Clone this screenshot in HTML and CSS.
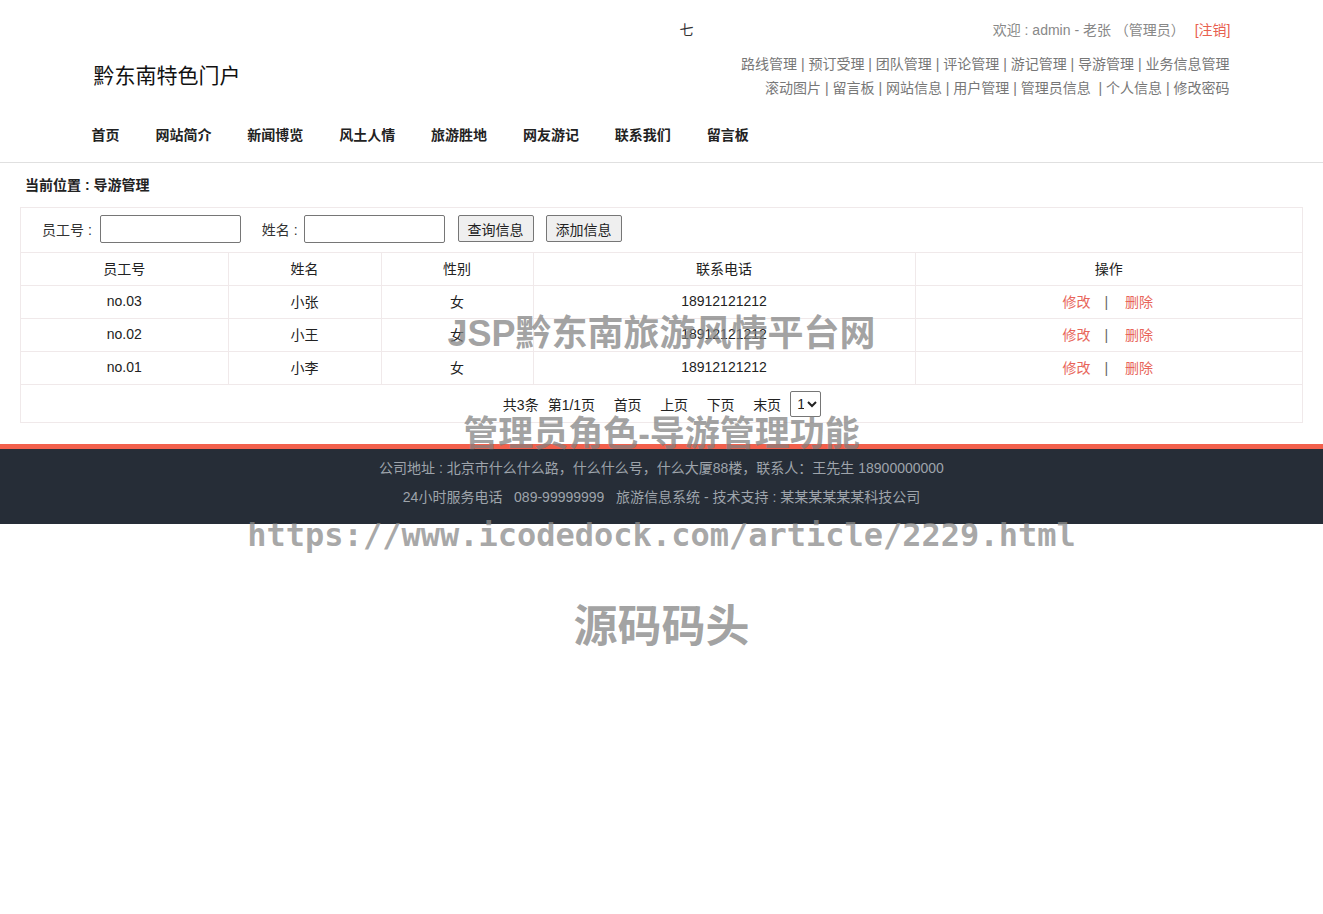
FILE: index.html
```html
<!DOCTYPE html>
<html lang="zh-CN">
<head>
<meta charset="utf-8">
<title>导游管理</title>
<link rel="stylesheet" href="styles.css">
</head>
<body>
<header class="site-header">
  <div class="container">
    <div class="top-row">
      <span class="odd-char">七</span>
      <span class="welcome">欢迎 : admin - 老张 （管理员） <a class="logout" href="#">[注销]</a></span>
    </div>
    <div class="brand-row">
      <div class="logo">黔东南特色门户</div>
      <div class="admin-links">
        <div>路线管理 | 预订受理 | 团队管理 | 评论管理 | 游记管理 | 导游管理 | 业务信息管理</div>
        <div>滚动图片 | 留言板 | 网站信息 | 用户管理 | 管理员信息 &nbsp;| 个人信息 | 修改密码</div>
      </div>
    </div>
    <nav class="main-nav">
      <a href="#">首页</a>
      <a href="#">网站简介</a>
      <a href="#">新闻博览</a>
      <a href="#">风土人情</a>
      <a href="#">旅游胜地</a>
      <a href="#">网友游记</a>
      <a href="#">联系我们</a>
      <a href="#">留言板</a>
    </nav>
  </div>
</header>

<main class="main">
  <div class="crumb">当前位置 : 导游管理</div>
  <div class="panel">
    <form class="search">
      <label class="lbl">员工号 :</label>
      <input class="inp" type="text">
      <label class="lbl lbl-name">姓名 :</label>
      <input class="inp" type="text">
      <button class="btn btn-query" type="button">查询信息</button>
      <button class="btn btn-add" type="button">添加信息</button>
    </form>
    <table class="grid">
      <colgroup>
        <col class="c1"><col class="c2"><col class="c3"><col class="c4"><col class="c5">
      </colgroup>
      <thead>
        <tr><th>员工号</th><th>姓名</th><th>性别</th><th>联系电话</th><th>操作</th></tr>
      </thead>
      <tbody>
        <tr><td>no.03</td><td>小张</td><td>女</td><td>18912121212</td><td class="ops"><a href="#">修改</a><span class="sep">|</span><a href="#">删除</a></td></tr>
        <tr><td>no.02</td><td>小王</td><td>女</td><td>18912121212</td><td class="ops"><a href="#">修改</a><span class="sep">|</span><a href="#">删除</a></td></tr>
        <tr><td>no.01</td><td>小李</td><td>女</td><td>18912121212</td><td class="ops"><a href="#">修改</a><span class="sep">|</span><a href="#">删除</a></td></tr>
      </tbody>
    </table>
    <div class="pager">
      <span>共3条</span>
      <span class="pg-cur">第1/1页</span>
      <a href="#">首页</a>
      <a href="#">上页</a>
      <a href="#">下页</a>
      <a href="#">末页</a>
      <select class="pg-sel"><option>1</option></select>
    </div>
  </div>
</main>

<footer class="site-footer">
  <p>公司地址 : 北京市什么什么路，什么什么号，什么大厦88楼，联系人：王先生 18900000000</p>
  <p>24小时服务电话 &nbsp;&nbsp;089-99999999 &nbsp;&nbsp;旅游信息系统 - 技术支持 : 某某某某某某科技公司</p>
</footer>

<div class="watermarks" aria-hidden="true">
  <div class="wm wm1">JSP黔东南旅游风情平台网</div>
  <div class="wm wm2">管理员角色-导游管理功能</div>
  <div class="wm wm3">https://www.icodedock.com/article/2229.html</div>
  <div class="wm wm4">源码码头</div>
</div>
</body>
</html>
```

FILE: styles.css
```css
* { box-sizing: border-box; }
html, body { margin: 0; padding: 0; background: #fff; }
body {
  font-family: "Liberation Sans", "Noto Sans CJK SC", sans-serif;
  font-size: 14px;
  color: #222;
  position: relative;
  min-height: 914px;
}
a { text-decoration: none; color: inherit; }

.site-header { border-bottom: 1px solid #e0e0e0; }
.container { width: 1140px; margin: 0 auto; }

.top-row {
  display: flex;
  align-items: center;
  height: 46px;
  padding-top: 12px;
}
.odd-char { margin-left: 588px; font-size: 14px; color: #333; }
.welcome { margin-left: auto; color: #888; font-size: 14px; padding-right: 1px; }
.logout { color: #e8604f; margin-left: 6px; }

.brand-row {
  display: flex;
  justify-content: space-between;
  align-items: center;
  height: 52px;
  padding-top: 8px;
}
.logo { font-size: 21px; color: #111; padding-left: 2px; line-height: 28px; }
.admin-links {
  text-align: right;
  color: #777;
  font-size: 14px;
  line-height: 24px;
  padding-right: 2px;
}

.main-nav {
  display: flex;
  gap: 35.9px;
  height: 64px;
  align-items: center;
  padding-top: 8px;
}
.main-nav a { font-weight: bold; font-size: 14px; color: #222; }

.main { padding: 0 20px; }
.crumb {
  font-weight: bold;
  font-size: 14px;
  padding: 11px 0 0 5px;
  height: 44px;
}

.panel { border: 1px solid #f0e9ea; }
.search {
  display: flex;
  align-items: center;
  height: 44px;
  padding-left: 21px;
  padding-bottom: 3px;
  margin: 0;
}
.lbl { color: #333; margin-right: 4px; }
.lbl:first-child { margin-right: 8px; }
.lbl-name { margin-left: 21px; margin-right: 6px; }
.inp {
  width: 141px;
  height: 28px;
  border: 1px solid #767676;
  border-radius: 2px;
  padding: 1px 2px;
  font: inherit;
}
.btn {
  height: 27px;
  width: 76px;
  font-family: "Liberation Sans", "Noto Sans CJK SC", sans-serif;
  font-size: 14px;
  color: #222;
  background: #efefef;
  border: 1px solid #767676;
  border-radius: 2px;
  padding: 0;
}
.btn-query { margin-left: 13px; }
.btn-add { margin-left: 12px; }

.grid {
  width: 100%;
  border-collapse: collapse;
  table-layout: fixed;
}
.c1 { width: 207px; }
.c2 { width: 153px; }
.c3 { width: 152px; }
.c4 { width: 382px; }
.c5 { width: auto; }
.grid th, .grid td {
  height: 33px;
  border: 1px solid #f0e9ea;
  text-align: center;
  font-weight: normal;
  padding: 0 0 2px;
  color: #222;
}
.grid tr > :first-child { border-left: none; }
.grid tr > :last-child { border-right: none; }
.ops a { color: #e8655a; }
.ops .sep { color: #666; margin: 0 17px 0 14px; }
.ops { padding-right: 2px !important; }

.pager {
  height: 37px;
  display: flex;
  justify-content: center;
  align-items: center;
  color: #222;
  padding-left: 1px;
}
.pager .pg-cur { margin-left: 9px; }
.pager a { margin-left: 18.5px; }
.pg-sel {
  margin-left: 9px;
  height: 26px;
  width: 31px;
  font-size: 14px;
  font-family: "Liberation Sans", sans-serif;
  border: 1px solid #767676;
  border-radius: 2px;
  background: #fff;
  color: #222;
  padding: 0 0 0 2px;
}

.site-footer {
  margin-top: 21px;
  border-top: 5px solid #f2604c;
  background: #262d37;
  color: #9ea4ab;
  text-align: center;
  padding: 5px 0 12px;
}
.site-footer p { margin: 0; line-height: 29px; font-size: 14px; }

.watermarks {
  position: absolute;
  left: 0;
  top: 0;
  width: 100%;
  pointer-events: none;
}
.wm {
  position: absolute;
  left: 0;
  width: 100%;
  text-align: center;
  font-weight: bold;
  color: rgba(128, 128, 128, 0.72);
  font-family: "Liberation Sans", "Noto Sans CJK SC", sans-serif;
  white-space: nowrap;
}
.wm1 { top: 311px; font-size: 36px; line-height: 46px; }
.wm2 { top: 411px; font-size: 35px; line-height: 46px; }
.wm3 {
  top: 514px;
  font-family: "DejaVu Sans Mono", "Liberation Mono", monospace;
  font-size: 32px;
  line-height: 42px;
  color: rgba(140, 140, 140, 0.75);
}
.wm4 { top: 600px; font-size: 44px; line-height: 54px; }
```
